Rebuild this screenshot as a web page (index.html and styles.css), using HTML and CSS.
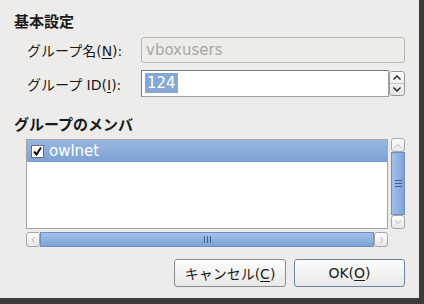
FILE: index.html
```html
<!DOCTYPE html>
<html lang="ja">
<head>
    <meta charset="UTF-8">
    <title>グループの編集</title>
    <link rel="stylesheet" href="styles.css">
</head>
<body>
    <div class="dialog">
        <h2 class="section">基本設定</h2>
        <div class="form">
            <label class="label">グループ名(<u>N</u>):</label>
            <div class="field disabled">vboxusers</div>
            <label class="label">グループ ID(<u>I</u>):</label>
            <div class="spin">
                <div class="field"><span class="sel">124</span></div>
                <div class="spin-btns">
                    <div class="spin-up">
                        <svg width="8" height="5" viewBox="0 0 8 5"><path d="M0.5 4.5 L4 1 L7.5 4.5" fill="none" stroke="#222" stroke-width="1.4"/></svg>
                    </div>
                    <div class="spin-down">
                        <svg width="8" height="5" viewBox="0 0 8 5"><path d="M0.5 0.5 L4 4 L7.5 0.5" fill="none" stroke="#222" stroke-width="1.4"/></svg>
                    </div>
                </div>
            </div>
        </div>

        <h2 class="section second">グループのメンバ</h2>
        <div class="members">
            <div class="list">
                <div class="row selected">
                    <span class="check">
                        <svg width="11" height="11" viewBox="0 0 11 11"><path d="M2 5.5 L4.5 8.5 L9 1.5" fill="none" stroke="#111" stroke-width="2"/></svg>
                    </span>
                    <span>owlnet</span>
                </div>
            </div>
            <div class="vscroll">
                <div class="sb-btn">
                    <svg width="8" height="5" viewBox="0 0 8 5"><path d="M1 4.5 L4 1.5 L7 4.5" fill="none" stroke="#b4b4b4" stroke-width="1"/></svg>
                </div>
                <div class="vthumb"><span class="grip-v"></span></div>
                <div class="sb-btn">
                    <svg width="8" height="5" viewBox="0 0 8 5"><path d="M1 0.5 L4 3.5 L7 0.5" fill="none" stroke="#b4b4b4" stroke-width="1"/></svg>
                </div>
            </div>
            <div class="hscroll">
                <div class="sb-btn">
                    <svg width="5" height="8" viewBox="0 0 5 8"><path d="M4 1 L1 4 L4 7" fill="none" stroke="#b4b4b4" stroke-width="1"/></svg>
                </div>
                <div class="hthumb"><span class="grip-h"></span></div>
                <div class="sb-btn">
                    <svg width="5" height="8" viewBox="0 0 5 8"><path d="M1 1 L4 4 L1 7" fill="none" stroke="#b4b4b4" stroke-width="1"/></svg>
                </div>
            </div>
        </div>

        <div class="buttons">
            <button class="btn">キャンセル(<u>C</u>)</button>
            <button class="btn default">OK(<u>O</u>)</button>
        </div>
    </div>
</body>
</html>
```

FILE: styles.css
```css
body {
    margin: 0;
    background-color: #3c3c3c;
    font-family: "DejaVu Sans", "Noto Sans CJK JP", sans-serif;
    font-size: 14px;
    color: #1a1a1a;
}
.dialog {
    width: 419px;
    height: 298px;
    box-sizing: border-box;
    background-color: #edecea;
    padding: 11px 14px 0 14px;
}
.section {
    font-size: 15px;
    font-weight: bold;
    margin: 0;
    height: 22px;
    line-height: 22px;
}
.section.second {
    margin-top: 17px;
}
.form {
    display: grid;
    grid-template-columns: 114px 264px;
    row-gap: 7px;
    margin: 4px 0 0 13px;
    align-items: center;
}
.label u, .btn u {
    text-decoration-thickness: 1px;
    text-underline-offset: 2px;
}
.field {
    height: 26px;
    box-sizing: border-box;
    border: 1px solid #8e8e8e;
    border-radius: 3px;
    background-color: #fff;
    padding: 0 4px;
    line-height: 24px;
    font-size: 15px;
}
.field.disabled {
    background-color: #edecea;
    border-color: #b8b6b3;
    color: #a8a8a8;
}
.spin {
    display: flex;
    align-items: center;
}
.spin .field {
    flex: 1;
    height: 27px;
    border-radius: 0;
    border-color: #7a7a7a #a0a0a0 #a0a0a0 #7a7a7a;
    padding-left: 3px;
}
.sel {
    background-color: #86a8d6;
    color: #fff;
    padding: 1px 2px;
}
.spin-btns {
    width: 16px;
    height: 25px;
    box-sizing: border-box;
    border: 1px solid #9a9a9a;
    border-radius: 3px;
    background: linear-gradient(#fafafa, #e6e5e3);
    display: flex;
    flex-direction: column;
}
.spin-up, .spin-down {
    flex: 1;
    display: flex;
    align-items: center;
    justify-content: center;
}
.spin-up {
    border-bottom: 1px solid #c4c4c4;
}
.members {
    display: grid;
    grid-template-columns: 362px 14px;
    column-gap: 3px;
    row-gap: 3px;
    margin: 3px 0 0 12px;
}
.list {
    height: 90px;
    box-sizing: border-box;
    border: 1px solid #a5a5a5;
    background-color: #fff;
}
.row {
    height: 22px;
    display: flex;
    align-items: center;
    gap: 5px;
    padding-left: 4px;
    font-size: 15px;
}
.row.selected {
    background: linear-gradient(#97b7e2, #7ca1d3);
    color: #fff;
}
.check {
    width: 11px;
    height: 11px;
    border: 1px solid #6f6f6f;
    background-color: #fff;
    display: flex;
}
.vscroll {
    display: flex;
    flex-direction: column;
    height: 91px;
    margin-top: -1px;
}
.hscroll {
    display: flex;
    height: 15px;
}
.sb-btn {
    flex: 0 0 14px;
    box-sizing: border-box;
    border: 1px solid #a7a7a7;
    border-radius: 3px;
    background: linear-gradient(#fdfdfd, #e8e7e5);
    display: flex;
    align-items: center;
    justify-content: center;
}
.vthumb, .hthumb {
    flex: 1;
    display: flex;
    align-items: center;
    justify-content: center;
    border: 1px solid #6f8fbf;
    box-sizing: border-box;
}
.vthumb {
    background: linear-gradient(90deg, #a3c0e8, #7fa3d6);
}
.hthumb {
    background: linear-gradient(#a3c0e8, #7fa3d6);
}
.grip-v {
    width: 7px;
    height: 7px;
    border-top: 1px solid #3f5f8f;
    border-bottom: 1px solid #3f5f8f;
    background: linear-gradient(transparent 2px, #3f5f8f 2px, #3f5f8f 3px, transparent 3px);
    box-sizing: border-box;
}
.grip-h {
    width: 7px;
    height: 7px;
    border-left: 1px solid #3f5f8f;
    border-right: 1px solid #3f5f8f;
    background: linear-gradient(90deg, transparent 2px, #3f5f8f 2px, #3f5f8f 3px, transparent 3px);
    box-sizing: border-box;
}
.buttons {
    display: flex;
    justify-content: flex-end;
    gap: 8px;
    margin-top: 12px;
}
.btn {
    height: 28px;
    font-family: inherit;
    font-size: 14px;
    color: #1a1a1a;
    border: 1px solid #8c8c8c;
    border-radius: 3px;
    background: linear-gradient(#fdfdfd, #e9e8e6);
    padding: 0;
    width: 112px;
}
.btn.default {
    width: 111px;
    border-color: #6d86a8;
}
```
